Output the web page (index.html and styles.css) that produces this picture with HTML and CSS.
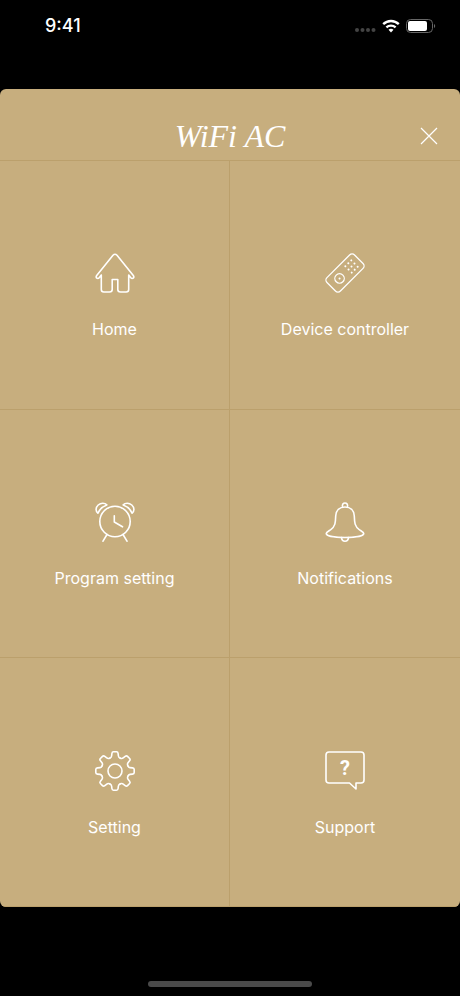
FILE: index.html
```html
<!DOCTYPE html>
<html lang="en">

<head>
    <meta charset="utf-8">
    <meta name="viewport" content="width=device-width, initial-scale=1">
    <title>WiFi AC</title>
    <link rel="stylesheet" href="styles.css">
</head>

<body>
    <div class="screen">
        <div class="status-bar">
            <span class="time">9:41</span>
            <div class="status-icons">
                <svg class="signal" width="22" height="16" viewBox="0 0 22 16">
                    <circle cx="3" cy="12" r="2" />
                    <circle cx="8.5" cy="12" r="2" />
                    <circle cx="14" cy="12" r="2" />
                    <circle cx="19.5" cy="12" r="2" />
                </svg>
                <svg class="wifi" width="18" height="14" viewBox="0 0 18 14">
                    <path d="M1.2 5.2C5.6.9 12.4.9 16.8 5.2" />
                    <path d="M4.4 8.4C7 6 11 6 13.6 8.4" />
                    <path class="wifi-dot" d="M6.5 10.7C7.9 9.5 10.1 9.5 11.5 10.7L9 13.4Z" />
                </svg>
                <svg class="battery" width="30" height="14" viewBox="0 0 30 14">
                    <rect class="battery-case" x="0.5" y="0.5" width="26" height="13" rx="4" />
                    <rect class="battery-level" x="2" y="2" width="19" height="10" rx="2" />
                    <path class="battery-tip" d="M28 5C29.6 5.5 29.6 8.5 28 9Z" />
                </svg>
            </div>
        </div>

        <main class="panel">
            <header class="panel-header">
                <h1 class="logo">WiFi AC</h1>
                <button type="button" class="close" aria-label="Close">
                    <svg width="18" height="18" viewBox="0 0 18 18">
                        <path d="M1 1L17 17M17 1L1 17" />
                    </svg>
                </button>
            </header>

            <nav class="menu">
                <a class="menu-item" href="#home">
                    <svg class="icon" viewBox="0 0 40 40">
                        <path d="M20 1.2Q19 1.2 18 2.2L1.7 22.5Q.6 24 1.8 25.2Q3 26 4.2 24.8L6.3 22V36.5Q6.3 39 8.8 39H14.5Q17.2 39 17.2 36.5V26.5H22.8V36.5Q22.8 39 25.5 39H31.2Q33.7 39 33.7 36.5V22L35.8 24.8Q37 26 38.2 25.2Q39.4 24 38.3 22.5L22 2.2Q21 1.2 20 1.2Z" />
                    </svg>
                    <span>Home</span>
                </a>
                <a class="menu-item" href="#device">
                    <svg class="icon icon-thin" viewBox="0 0 40 40">
                        <g transform="rotate(-45 20 20)">
                            <rect x="0.5" y="10.5" width="39" height="19" rx="3.5" />
                            <circle cx="12.3" cy="20" r="4.7" />
                            <circle class="dot" cx="12.3" cy="20" r="1" />
                            <g class="dot">
                                <circle cx="25" cy="15.5" r="1" />
                                <circle cx="29.2" cy="15.5" r="1" />
                                <circle cx="33.4" cy="15.5" r="1" />
                                <circle cx="25" cy="20" r="1" />
                                <circle cx="29.2" cy="20" r="1" />
                                <circle cx="33.4" cy="20" r="1" />
                                <circle cx="25" cy="24.5" r="1" />
                                <circle cx="29.2" cy="24.5" r="1" />
                                <circle cx="33.4" cy="24.5" r="1" />
                            </g>
                        </g>
                    </svg>
                    <span>Device controller</span>
                </a>
                <a class="menu-item" href="#program">
                    <svg class="icon" viewBox="0 0 40 40">
                        <circle cx="20" cy="19.5" r="15.2" />
                        <path d="M19.3 13.8V20L27.5 24.8M12 32.5L8 39.2M28 32.5L32 39.2" />
                        <path d="M2.9 11.2C.4 9 .5 5.5 3.2 3C6 .5 9.8.7 11.8 2.9C7.8 4.3 4.6 7.2 2.9 11.2Z" />
                        <path d="M37.1 11.2C39.6 9 39.5 5.5 36.8 3C34 .5 30.2.7 28.2 2.9C32.2 4.3 35.4 7.2 37.1 11.2Z" />
                    </svg>
                    <span>Program setting</span>
                </a>
                <a class="menu-item" href="#notifications">
                    <svg class="icon" viewBox="0 0 40 40">
                        <path d="M20 5C14.5 5 11 8.5 10.7 14C10.5 20 10.5 24.5 5.5 27.8C3 29.4 1.3 30.2 1.2 31.7C1.5 34.2 11 35.5 20 35.5C29 35.5 38.5 34.2 38.8 31.7C38.7 30.2 37 29.4 34.5 27.8C29.5 24.5 29.5 20 29.3 14C29 8.5 25.5 5 20 5Z" />
                        <path d="M17.6 5C16.8 2.5 18.3 1 20 1C21.7 1 23.2 2.5 22.4 5" />
                        <path d="M16.5 35.6C16.8 38 18.2 39.2 20 39.2C21.8 39.2 23.2 38 23.5 35.6" />
                    </svg>
                    <span>Notifications</span>
                </a>
                <a class="menu-item" href="#setting">
                    <svg class="icon" viewBox="0 0 40 40">
                        <defs>
                            <path id="tooth" d="M-5.3 -12.8Q-3.6 -13.5 -3.4 -15L-3.1 -17.5Q-2.9 -19.2 -1.5 -19.2H1.5Q2.9 -19.2 3.1 -17.5L3.4 -15Q3.6 -13.5 5.3 -12.8" />
                        </defs>
                        <g transform="translate(20 20)">
                            <circle r="7" />
                            <use href="#tooth" />
                            <use href="#tooth" transform="rotate(45)" />
                            <use href="#tooth" transform="rotate(90)" />
                            <use href="#tooth" transform="rotate(135)" />
                            <use href="#tooth" transform="rotate(180)" />
                            <use href="#tooth" transform="rotate(225)" />
                            <use href="#tooth" transform="rotate(270)" />
                            <use href="#tooth" transform="rotate(315)" />
                        </g>
                    </svg>
                    <span>Setting</span>
                </a>
                <a class="menu-item" href="#support">
                    <svg class="icon" viewBox="0 0 40 40">
                        <path d="M4 1H36Q39 1 39 4V29Q39 32 36 32H31V38L24.5 32H4Q1 32 1 29V4Q1 1 4 1Z" />
                        <text class="mark" x="20" y="24" text-anchor="middle">?</text>
                    </svg>
                    <span>Support</span>
                </a>
            </nav>
        </main>

        <div class="home-bar">
            <div class="home-indicator"></div>
        </div>
    </div>
</body>

</html>
```
FILE: styles.css
```css
* {
    box-sizing: border-box;
}

body {
    margin: 0;
    background-color: #000;
    color: #fff;
    font-family: Inter, "Liberation Sans", sans-serif;
}

.screen {
    display: flex;
    flex-direction: column;
    min-height: 100vh;
}

/* status bar */
.status-bar {
    display: flex;
    justify-content: space-between;
    align-items: center;
    padding: 14px 24px 51px 45px;
}

.time {
    font-size: 18px;
    font-weight: 500;
    line-height: 24px;
}

.status-icons {
    display: flex;
    align-items: center;
    gap: 6px;
}

.signal {
    fill: #444;
}

.wifi {
    fill: none;
    stroke: #fff;
    stroke-width: 2.4;
}

.wifi-dot {
    fill: #fff;
    stroke: none;
}

.battery-case {
    fill: none;
    stroke: #666;
}

.battery-level {
    fill: #fff;
}

.battery-tip {
    fill: #666;
}

/* panel */
.panel {
    flex: 1;
    display: flex;
    flex-direction: column;
    background-color: #c7ae7e;
    border-radius: 6px;
    overflow: hidden;
}

.panel-header {
    display: grid;
    grid-template-columns: 1fr auto 1fr;
    align-items: center;
    padding: 25px 20px 2px;
    border-bottom: 1px solid #bba06c;
}

.logo {
    grid-column: 2;
    margin: 0;
    font-family: "Liberation Serif", serif;
    font-size: 32px;
    font-style: italic;
    font-weight: normal;
    line-height: 44px;
}

.close {
    justify-self: end;
    display: flex;
    padding: 2px;
    border: none;
    background: none;
    cursor: pointer;
}

.close svg {
    stroke: #fff;
    stroke-width: 1.2;
}

/* menu */
.menu {
    flex: 1;
    display: grid;
    grid-template-columns: 1fr 1fr;
    grid-auto-rows: 1fr;
}

.menu-item {
    display: flex;
    flex-direction: column;
    align-items: center;
    justify-content: center;
    gap: 24px;
    padding-top: 25px;
    border-bottom: 1px solid #bba06c;
    color: #fff;
    font-size: 16px;
    line-height: 24px;
    text-decoration: none;
}

.menu-item:nth-child(odd) {
    border-right: 1px solid #bba06c;
}

.icon {
    width: 40px;
    height: 40px;
    fill: none;
    stroke: #fff;
    stroke-width: 1.6;
    stroke-linecap: round;
    stroke-linejoin: round;
}

.icon-thin {
    stroke-width: 1.3;
}

.dot {
    fill: #fff;
    stroke: none;
}

.mark {
    fill: #fff;
    stroke: none;
    font-family: Roboto, sans-serif;
    font-size: 20px;
    font-weight: 700;
}

/* bottom bar */
.home-bar {
    display: flex;
    justify-content: center;
    padding: 74px 0 9px;
}

.home-indicator {
    width: 164px;
    height: 6px;
    border-radius: 3px;
    background-color: #4a4a4a;
}
```
